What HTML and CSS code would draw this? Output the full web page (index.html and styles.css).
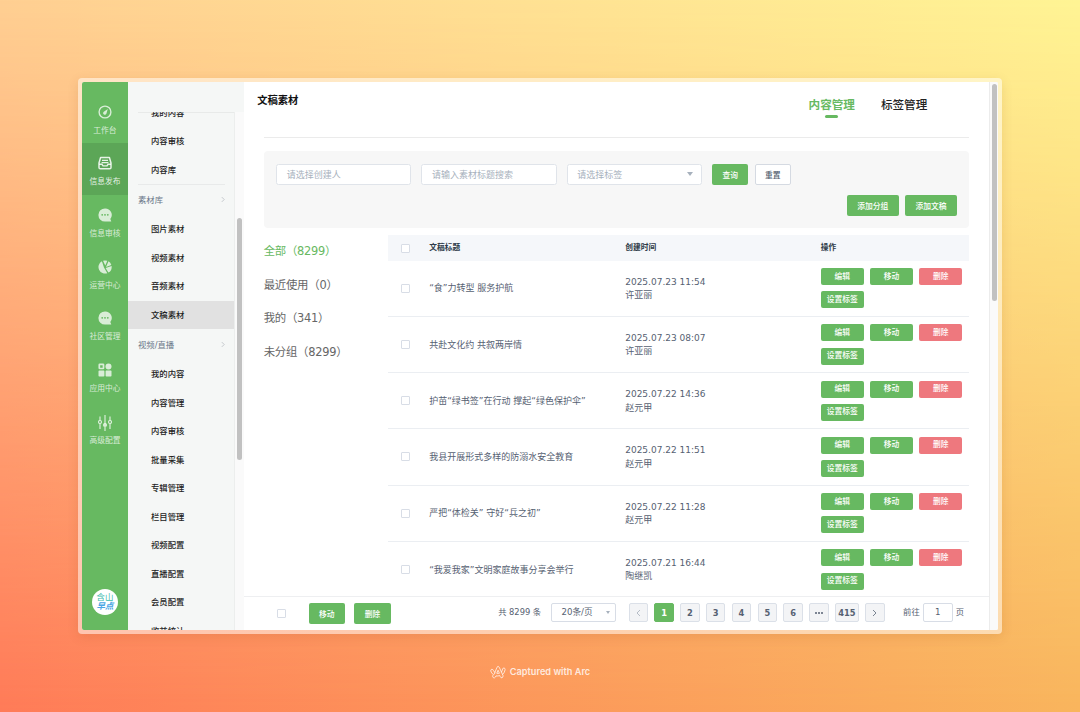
FILE: index.html
```html
<!DOCTYPE html>
<html lang="zh-CN">
<head>
<meta charset="UTF-8">
<meta name="viewport" content="width=device-width, initial-scale=1.0">
<title>文稿素材</title>
<link rel="stylesheet" href="styles.css">
</head>

<body>

<div class="frame">
<div class="window">

    <div class="nav">
        <div class="nav-item">
            <svg viewBox="0 0 14 14"><circle cx="7" cy="7" r="5.900" fill="none" stroke="currentColor" stroke-width="1.400"/><path d="M9.800 3.900L8.500 8.200a1.700 1.700 0 1 1-2.700-1.500z" fill="currentColor"/></svg>
            <span>工作台</span>
        </div>
        <div class="nav-item active">
            <svg viewBox="0 0 14 14"><path d="M2.600 1.500h8.800L13 7v4.400a1.300 1.300 0 0 1-1.300 1.300H2.300A1.300 1.300 0 0 1 1 11.400V7z" fill="none" stroke="currentColor" stroke-width="1.500" stroke-linejoin="round"/><path d="M4 4.300h6M3.600 6.600h6.800" stroke="currentColor" stroke-width="1.200"/><path d="M1 8.300h3l1 1.600h4l1-1.600h3" fill="none" stroke="currentColor" stroke-width="1.400"/></svg>
            <span>信息发布</span>
        </div>
        <div class="nav-item">
            <svg viewBox="0 0 14 14"><path d="M7 .4a6.600 6.600 0 1 0 0 13.200h6.300l-1-2.500A6.600 6.600 0 0 0 7 .4z" fill="currentColor"/><g class="dot"><circle cx="4.200" cy="6.800" r=".9"/><circle cx="7" cy="6.800" r=".9"/><circle cx="9.800" cy="6.800" r=".9"/></g></svg>
            <span>信息审核</span>
        </div>
        <div class="nav-item">
            <svg viewBox="0 0 14 14"><path d="M3.900 1.200A6.600 6.600 0 0 0 9.300 13.200L6 7.500z" fill="currentColor"/><path d="M5 .7a6.600 6.600 0 0 1 4.300.1L7.300 5.600z" fill="currentColor"/><path d="M10.500 1.300a6.600 6.600 0 0 1 2.800 3.600L8 6.900z" fill="currentColor"/><path d="M13.600 6.100a6.600 6.600 0 0 1-3.200 6.500L7.600 8z" fill="currentColor"/></svg>
            <span>运营中心</span>
        </div>
        <div class="nav-item">
            <svg viewBox="0 0 14 14"><path d="M7 .4a6.600 6.600 0 1 0 0 13.200h6.300l-1-2.500A6.600 6.600 0 0 0 7 .4z" fill="currentColor"/><g class="dot"><circle cx="4.200" cy="6.800" r=".9"/><circle cx="7" cy="6.800" r=".9"/><circle cx="9.800" cy="6.800" r=".9"/></g></svg>
            <span>社区管理</span>
        </div>
        <div class="nav-item">
            <svg viewBox="0 0 14 14"><rect x="1.300" y="1.300" width="4.200" height="4.200" rx=".5" fill="none" stroke="currentColor" stroke-width="1.700"/><circle cx="10.500" cy="3.400" r="3" fill="currentColor"/><rect x=".5" y="7.600" width="5.900" height="6" rx=".8" fill="currentColor"/><rect x="7.600" y="7.600" width="5.900" height="6" rx=".8" fill="currentColor"/></svg>
            <span>应用中心</span>
        </div>
        <div class="nav-item">
            <svg class="tall" viewBox="0 0 14 16"><g fill="none" stroke="currentColor" stroke-width="1.200"><path d="M2 1.500v4M2 8.500V14M7 0v9M7 12v4M12 1.500v4M12 8.500V14"/><circle cx="2" cy="7" r="1.500"/><circle cx="12" cy="7" r="1.500"/></g><circle cx="7" cy="10" r="2.100" fill="currentColor"/></svg>
            <span>高级配置</span>
        </div>
        <div class="brand"><b>含山</b><i>早点</i></div>
    </div>

    <div class="menu">
        <div class="menu-list">
            <a class="menu-item">我的内容</a>
            <a class="menu-item">内容审核</a>
            <a class="menu-item">内容库</a>
            <div class="menu-group line">素材库<svg viewBox="0 0 5 8"><path d="M1 1l3 3-3 3"/></svg></div>
            <a class="menu-item">图片素材</a>
            <a class="menu-item">视频素材</a>
            <a class="menu-item">音频素材</a>
            <a class="menu-item active">文稿素材</a>
            <div class="menu-group">视频/直播<svg viewBox="0 0 5 8"><path d="M1 1l3 3-3 3"/></svg></div>
            <a class="menu-item">我的内容</a>
            <a class="menu-item">内容管理</a>
            <a class="menu-item">内容审核</a>
            <a class="menu-item">批量采集</a>
            <a class="menu-item">专辑管理</a>
            <a class="menu-item">栏目管理</a>
            <a class="menu-item">视频配置</a>
            <a class="menu-item">直播配置</a>
            <a class="menu-item">会员配置</a>
            <a class="menu-item">收益统计</a>
        </div>
        <div class="menu-scroll"><div class="thumb"></div></div>
    </div>

    <div class="main">
        <div class="content">
            <div class="head">
                <h1>文稿素材</h1>
                <div class="tabs">
                    <a class="tab active">内容管理</a>
                    <a class="tab">标签管理</a>
                </div>
            </div>

            <div class="filter">
                <div class="filter-row">
                    <div class="input">请选择创建人</div>
                    <div class="input">请输入素材标题搜索</div>
                    <div class="input">请选择标签<i class="caret"></i></div>
                    <button class="btn">查询</button>
                    <button class="btn plain">重置</button>
                </div>
                <div class="filter-row right">
                    <button class="btn">添加分组</button>
                    <button class="btn">添加文稿</button>
                </div>
            </div>

            <div class="body">
                <div class="cats">
                    <a class="active">全部（8299）</a>
                    <a>最近使用（0）</a>
                    <a>我的（341）</a>
                    <a>未分组（8299）</a>
                </div>
                <div class="table">
                    <div class="row th">
                        <i class="check"></i>
                        <div>文稿标题</div>
                        <div>创建时间</div>
                        <div>操作</div>
                    </div>
                    <div class="row">
                        <i class="check"></i>
                        <div class="text">“食”力转型 服务护航</div>
                        <div class="text">2025.07.23 11:54<br>许亚丽</div>
                        <div class="ops"><button>编辑</button><button>移动</button><button class="del">删除</button><button>设置标签</button></div>
                    </div>
                    <div class="row">
                        <i class="check"></i>
                        <div class="text">共赴文化约 共叙两岸情</div>
                        <div class="text">2025.07.23 08:07<br>许亚丽</div>
                        <div class="ops"><button>编辑</button><button>移动</button><button class="del">删除</button><button>设置标签</button></div>
                    </div>
                    <div class="row">
                        <i class="check"></i>
                        <div class="text">护苗“绿书签”在行动 撑起“绿色保护伞”</div>
                        <div class="text">2025.07.22 14:36<br>赵元甲</div>
                        <div class="ops"><button>编辑</button><button>移动</button><button class="del">删除</button><button>设置标签</button></div>
                    </div>
                    <div class="row">
                        <i class="check"></i>
                        <div class="text">我县开展形式多样的防溺水安全教育</div>
                        <div class="text">2025.07.22 11:51<br>赵元甲</div>
                        <div class="ops"><button>编辑</button><button>移动</button><button class="del">删除</button><button>设置标签</button></div>
                    </div>
                    <div class="row">
                        <i class="check"></i>
                        <div class="text">严把“体检关” 守好“兵之初”</div>
                        <div class="text">2025.07.22 11:28<br>赵元甲</div>
                        <div class="ops"><button>编辑</button><button>移动</button><button class="del">删除</button><button>设置标签</button></div>
                    </div>
                    <div class="row">
                        <i class="check"></i>
                        <div class="text">“我爱我家”文明家庭故事分享会举行</div>
                        <div class="text">2025.07.21 16:44<br>陶继凯</div>
                        <div class="ops"><button>编辑</button><button>移动</button><button class="del">删除</button><button>设置标签</button></div>
                    </div>
                </div>
            </div>
        </div>

        <div class="footer">
            <div class="batch">
                <i class="check"></i>
                <button class="btn">移动</button>
                <button class="btn">删除</button>
            </div>
            <div class="pager">
                <span class="total">共 8299 条</span>
                <div class="size">20条/页<i class="caret"></i></div>
                <a class="page"><svg class="off" viewBox="0 0 5 8"><path d="M4 1L1 4l3 3"/></svg></a>
                <a class="page active">1</a>
                <a class="page">2</a>
                <a class="page">3</a>
                <a class="page">4</a>
                <a class="page">5</a>
                <a class="page">6</a>
                <a class="page"><svg class="more" viewBox="0 0 8 2"><circle cx="1" cy="1" r="1"/><circle cx="4" cy="1" r="1"/><circle cx="7" cy="1" r="1"/></svg></a>
                <a class="page wide">415</a>
                <a class="page"><svg viewBox="0 0 5 8"><path d="M1 1l3 3-3 3"/></svg></a>
                <div class="jump">前往<span>1</span>页</div>
            </div>
        </div>
    </div>

    <div class="main-scroll"><div class="thumb"></div></div>

</div>
</div>

<div class="credit">
    <svg viewBox="0 0 32 28"><path d="M8 19L14 4.500q2-4 4.500 0L26 21q.8 3.500-2 4.500-2.500.500-3.500-2l-1-2.500q-3.500 1.500-7.500.8l-1 2.200q-1.500 2.500-4 1.500Q4.500 24 5.500 21.500L6.500 19Q2.500 16 1.500 12q-.3-3 2.200-3.500 2.300 0 3.200 2.500 1 3 3.800 4.500M13.500 16.500l2.700-6 2.700 6q-2.600 1-5.400 0M22.500 14.500q2.200-3 2.700-6.500.800-2.500 3-2 2.500.800 2 3.500-.7 5-5 9.500"/></svg>
    <span>Captured with Arc</span>
</div>

</body>
</html>
```
FILE: styles.css
```css
*{
    box-sizing:border-box;
}

html{
    height:100%;
}

body{
    position:relative;
    margin:0;
    height:712px;
    padding-top:78px;
    overflow:hidden;
    font-family:"DejaVu Sans","Noto Sans CJK SC",sans-serif;
    font-size:9px;
    color:#566172;
    background:linear-gradient(90deg,#ff7b58,#f9b55d);
}

/* warm layer fading towards the bottom */
body::before{
    content:"";
    position:absolute;
    inset:0;
    z-index:-1;
    background:linear-gradient(90deg,#ffcf92,#fff494);
    -webkit-mask-image:linear-gradient(#000,transparent);
    mask-image:linear-gradient(#000,transparent);
}

button{
    border:none;
    padding:0;
    font-family:inherit;
}

.frame{
    width:924px;
    height:556px;
    margin:0 auto;
    padding:4px;
    border-radius:4px;
    background:rgba(255,255,255,0.5);
    box-shadow:0 3px 12px rgba(120,60,0,0.12);
}

.window{
    display:flex;
    height:548px;
    border-radius:2px;
    overflow:hidden;
    background:#fff;
}

/* left nav */
.nav{
    display:flex;
    flex-direction:column;
    width:46px;
    padding-top:9.500px;
    background:#67b961;
}

.nav-item{
    display:flex;
    flex-direction:column;
    align-items:center;
    height:51.700px;
    padding-top:13px;
    color:rgba(255,255,255,0.75);
    font-size:7.750px;
    line-height:12px;
}

.nav-item.active{
    background:#5ca657;
    color:rgba(255,255,255,0.85);
}

.nav-item svg{
    width:14px;
    height:14px;
    margin-bottom:6px;
}

.nav-item .tall{
    height:16px;
    margin-bottom:4px;
}

.nav-item .dot{
    fill:#67b961;
}

.brand{
    display:flex;
    flex-direction:column;
    justify-content:center;
    width:26px;
    height:26px;
    margin:auto auto 15px;
    border-radius:50%;
    background:#fff;
    text-align:center;
    font-size:8.500px;
    line-height:9.500px;
}

.brand b{
    font-weight:400;
    color:#3cbcae;
}

.brand i{
    font-weight:700;
    color:#4aa5e4;
}

/* second menu */
.menu{
    display:flex;
    width:116px;
    padding-top:29.500px;
    background:#f5f7f6;
}

.menu-list{
    width:107px;
    overflow:hidden;
    border-right:1px solid #eceeed;
    background:linear-gradient(#e8eae9,#e8eae9) 10px 0/97px 1px no-repeat;
}

.menu-item{
    display:block;
    height:28.500px;
    padding-left:23px;
    font-size:8.330px;
    line-height:29px;
    font-weight:500;
    color:#222;
}

.menu-item:first-child{
    margin-top:-12.700px;
}

.menu-item.active{
    background:#e1e1e1;
}

.menu-group{
    display:flex;
    justify-content:space-between;
    align-items:center;
    height:31px;
    margin:0 9px 0 10px;
    padding-bottom:2px;
    font-size:8.330px;
    color:#6b7889;
    border-top:1px solid transparent;
}

.menu-group.line{
    border-color:#e8eaea;
}

.menu-group svg{
    width:4px;
    height:7px;
    fill:none;
    stroke:#b9bec3;
}

.menu-scroll{
    width:9px;
    padding:106px 2px 0;
    background:#fafafa;
}

.thumb{
    border-radius:3px;
    background:#c1c1c1;
}

.menu-scroll .thumb{
    height:242px;
}

/* content */
.main{
    display:flex;
    flex-direction:column;
    width:745px;
}

.content{
    flex:1;
    overflow:hidden;
    padding:0 19.700px;
}

.head{
    display:flex;
    justify-content:space-between;
    height:56px;
    border-bottom:1px solid #ebebeb;
}

.head h1{
    margin:10px 0 0 -6.500px;
    font-size:10.300px;
    line-height:16px;
    color:#111;
}

.tabs{
    display:flex;
    gap:26px;
    padding:14px 42px 0 0;
}

.tab{
    display:flex;
    flex-direction:column;
    align-items:center;
    font-size:11.600px;
    line-height:19px;
    font-weight:500;
    color:#222;
}

.tab.active{
    font-weight:700;
    color:#67b961;
}

.tab.active::after{
    content:"";
    width:13px;
    height:3px;
    border-radius:2px;
    background:#67b961;
}

.filter{
    height:77px;
    margin-top:13px;
    padding:12.500px 12.500px 0;
    border-radius:4px;
    background:#f7f7f7;
}

.filter-row{
    display:flex;
    gap:6.300px;
}

.filter-row.right{
    justify-content:flex-end;
    margin-top:10px;
}

.input{
    display:flex;
    justify-content:space-between;
    align-items:center;
    width:135.300px;
    height:21px;
    margin-right:3.700px;
    padding:0 8px 0 9.500px;
    border:1px solid #e0e4ea;
    border-radius:2.500px;
    background:#fff;
    color:#a7b1bd;
}

.caret{
    border:3px solid transparent;
    border-top:4px solid #a7b1bd;
    border-bottom:none;
}

.btn{
    height:21px;
    padding:0 10.400px;
    border-radius:2px;
    background:#67b961;
    color:#fff;
    font-size:7.750px;
    font-weight:500;
}

.btn.plain{
    padding:0 9.400px;
    border:1px solid #d5dae2;
    background:#fff;
    color:#4e5a6a;
}

.body{
    display:flex;
    margin-top:7px;
}

.cats{
    display:flex;
    flex-direction:column;
    width:124px;
    font-size:11.400px;
    line-height:33.600px;
    letter-spacing:-0.250px;
    color:#666;
}

.cats .active{
    color:#67b961;
}

.table{
    flex:1;
}

.row{
    display:grid;
    grid-template-columns:41.500px 196px 195.500px 1fr;
    align-items:center;
    height:56.250px;
    border-bottom:1px solid #ebeef2;
    line-height:13.700px;
}

.row .text{
    padding-top:2px;
}

.row.th{
    height:25.600px;
    padding-top:1px;
    border:none;
    background:#f5f7fa;
    font-size:7.750px;
    font-weight:700;
    color:#2f3b49;
}

.check{
    width:9px;
    height:9px;
    border:1px solid #d8dde6;
    border-radius:1px;
    background:#fff;
}

.row .check{
    margin-left:13px;
}

.ops{
    display:flex;
    flex-wrap:wrap;
    gap:6.300px;
}

.ops button{
    width:43px;
    height:17px;
    border-radius:2px;
    background:#67b961;
    color:#fff;
    font-size:7.750px;
    font-weight:500;
    line-height:16px;
}

.ops .del{
    background:#ee787e;
}

/* bottom bar */
.footer{
    display:flex;
    justify-content:space-between;
    height:34px;
    padding:6px 25px 0 33px;
    border-top:1px solid #eeeff1;
}

.batch{
    display:flex;
}

.batch .check{
    margin:6px 22.500px 0 0;
}

.batch .btn{
    margin-right:9.500px;
}

.pager{
    display:flex;
    gap:6.450px;
    height:19px;
    line-height:19px;
    font-size:8.300px;
}

.total{
    margin-right:3px;
}

.size{
    display:flex;
    justify-content:space-between;
    align-items:center;
    width:65px;
    margin-right:6.500px;
    padding:0 5px 0 10px;
    border:1px solid #d8dde6;
    border-radius:2px;
    font-size:8.600px;
}

.size .caret{
    border-width:2.500px;
    border-top-width:3px;
    border-bottom:none;
}

.page{
    display:flex;
    align-items:center;
    justify-content:center;
    width:19.400px;
    padding-top:1px;
    border:1px solid #dbe0e8;
    border-radius:2px;
    background:#f3f4f6;
    font-weight:700;
}

.page.wide{
    width:23.700px;
}

.page.active{
    border-color:#67b961;
    background:#67b961;
    color:#fff;
}

.page svg{
    width:5px;
    height:8px;
    fill:none;
    stroke:#7a8492;
}

.page .off{
    stroke:#b5bcc6;
}

.page .more{
    width:8px;
    height:2px;
    fill:#566172;
    stroke:none;
}

.jump{
    display:flex;
    gap:3px;
    margin-left:12px;
}

.jump span{
    width:30px;
    border:1px solid #d8dde6;
    border-radius:2px;
    line-height:17px;
    text-align:center;
    font-size:8.700px;
}

.main-scroll{
    width:9px;
    padding:1.500px 1.500px 0;
    border-left:1px solid #ececec;
    background:#fafafa;
}

.main-scroll .thumb{
    width:5.500px;
    height:217px;
}

.credit{
    display:flex;
    justify-content:center;
    align-items:center;
    gap:4px;
    margin-top:30px;
    font-family:Inter,sans-serif;
    font-size:9.200px;
    font-weight:600;
    line-height:16px;
    color:rgba(255,255,255,0.8);
}

.credit svg{
    width:16px;
    height:14px;
    fill:none;
    stroke:rgba(255,255,255,0.8);
    stroke-width:1.800;
    stroke-linejoin:round;
}
```
